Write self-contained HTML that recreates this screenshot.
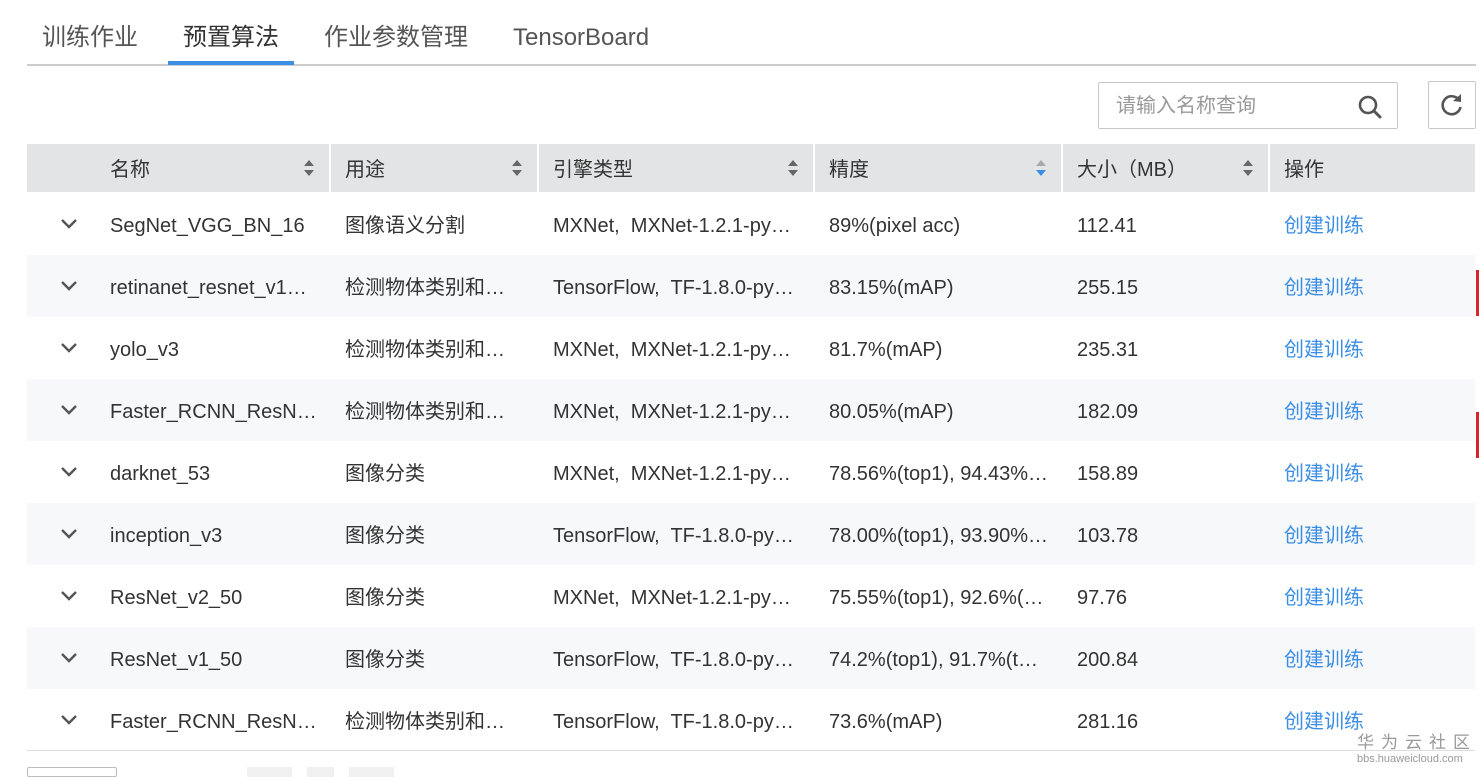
<!DOCTYPE html>
<html><head><meta charset="utf-8"><style>
*{margin:0;padding:0;box-sizing:border-box}
body{width:1479px;height:773px;background:#fff;font-family:"Liberation Sans","Noto Sans CJK SC",sans-serif;color:#333;position:relative;overflow:hidden}
.tab{position:absolute;top:23px;font-size:24px;color:#555;line-height:30px}
.abs{position:absolute}
.row{position:absolute;left:27px;width:1448px;height:62px;font-size:20px;color:#333}
.row div{position:absolute;top:2px;line-height:62px;white-space:nowrap}
.g{background:#f7f8f9}
.hd{position:absolute;left:27px;top:144px;width:1448px;height:48px;background:#e3e4e6;font-size:20px;color:#333}
.hd div.t{position:absolute;top:2px;line-height:48px}
.sep{position:absolute;top:0;width:2px;height:48px;background:#fff}
.sort{position:absolute;top:14px;width:12px;height:20px}
a{color:#3b8ee4;text-decoration:none}
</style></head><body>
<div class="tab" style="left:42px">训练作业</div>
<div class="tab" style="left:183px;color:#333">预置算法</div>
<div class="tab" style="left:324px">作业参数管理</div>
<div class="tab" style="left:513px">TensorBoard</div>
<div class="abs" style="left:27px;top:64px;width:1449px;height:2px;background:#ccc"></div>
<div class="abs" style="left:168px;top:61px;width:126px;height:4px;background:#3b8ee4"></div>

<div class="abs" style="left:1098px;top:82px;width:300px;height:47px;border:1px solid #c8c8c8;border-radius:2px"></div>
<div class="abs" style="left:1116px;top:92px;font-size:20px;color:#999;line-height:28px">请输入名称查询</div>
<svg class="abs" style="left:1356px;top:93px" width="28" height="28" viewBox="0 0 28 28"><circle cx="12" cy="12" r="8" fill="none" stroke="#555" stroke-width="2.6"/><line x1="18" y1="18" x2="24" y2="24" stroke="#555" stroke-width="3" stroke-linecap="round"/></svg>
<div class="abs" style="left:1428px;top:81px;width:48px;height:48px;border:1px solid #c8c8c8;border-radius:2px"></div>
<svg class="abs" style="left:1439px;top:92px" width="26" height="26" viewBox="0 0 26 26"><path d="M20 8A9 9 0 1 0 21.5 15" fill="none" stroke="#555" stroke-width="2.6"/><path d="M14 9L22 10L22 2Z" fill="#555"/></svg>

<div class="hd">
<div class="t" style="left:83px">名称</div>
<div class="t" style="left:318px">用途</div>
<div class="t" style="left:526px">引擎类型</div>
<div class="t" style="left:802px">精度</div>
<div class="t" style="left:1050px">大小（MB）</div>
<div class="t" style="left:1257px">操作</div>
<div class="sep" style="left:302px"></div><div class="sep" style="left:510px"></div><div class="sep" style="left:786px"></div><div class="sep" style="left:1034px"></div><div class="sep" style="left:1241px"></div>
<svg class="sort" style="left:276px" viewBox="0 0 12 20"><path d="M6 2L11 8H1Z M6 18L11 12H1Z" fill="#666"/></svg>
<svg class="sort" style="left:484px" viewBox="0 0 12 20"><path d="M6 2L11 8H1Z M6 18L11 12H1Z" fill="#666"/></svg>
<svg class="sort" style="left:760px" viewBox="0 0 12 20"><path d="M6 2L11 8H1Z M6 18L11 12H1Z" fill="#666"/></svg>
<svg class="sort" style="left:1008px" viewBox="0 0 12 20"><path d="M6 2L11 8H1Z" fill="#aaa"/><path d="M6 18L11 12H1Z" fill="#3b8ee4"/></svg>
<svg class="sort" style="left:1215px" viewBox="0 0 12 20"><path d="M6 2L11 8H1Z M6 18L11 12H1Z" fill="#666"/></svg>
</div>

<div id="rows"></div>
<div class="abs" style="left:27px;top:750px;width:1448px;height:1px;background:#ddd"></div>
<div class="abs" style="left:27px;top:767px;width:90px;height:10px;border:1px solid #bbb;border-radius:2px"></div>
<div class="abs" style="left:247px;top:767px;width:45px;height:10px;background:#f0f0f0"></div>
<div class="abs" style="left:307px;top:767px;width:27px;height:10px;background:#f0f0f0"></div>
<div class="abs" style="left:349px;top:767px;width:45px;height:10px;background:#f0f0f0"></div>
<div class="abs" style="left:1476px;top:270px;width:3px;height:46px;background:#d9232e"></div>
<div class="abs" style="left:1476px;top:412px;width:3px;height:46px;background:#d9232e"></div>
<div class="abs" style="left:1357px;top:732px;font-size:17px;line-height:22px;color:#999;letter-spacing:7px;white-space:nowrap">华为云社区</div>
<div class="abs" style="left:1357px;top:753px;font-size:11px;line-height:12px;color:#999;white-space:nowrap">bbs.huaweicloud.com</div>
<script>
var d=[["SegNet_VGG_BN_16","图像语义分割","MXNet,&nbsp; MXNet-1.2.1-py…","89%(pixel acc)","112.41"],
["retinanet_resnet_v1…","检测物体类别和…","TensorFlow,&nbsp; TF-1.8.0-py…","83.15%(mAP)","255.15"],
["yolo_v3","检测物体类别和…","MXNet,&nbsp; MXNet-1.2.1-py…","81.7%(mAP)","235.31"],
["Faster_RCNN_ResN…","检测物体类别和…","MXNet,&nbsp; MXNet-1.2.1-py…","80.05%(mAP)","182.09"],
["darknet_53","图像分类","MXNet,&nbsp; MXNet-1.2.1-py…","78.56%(top1), 94.43%…","158.89"],
["inception_v3","图像分类","TensorFlow,&nbsp; TF-1.8.0-py…","78.00%(top1), 93.90%…","103.78"],
["ResNet_v2_50","图像分类","MXNet,&nbsp; MXNet-1.2.1-py…","75.55%(top1), 92.6%(…","97.76"],
["ResNet_v1_50","图像分类","TensorFlow,&nbsp; TF-1.8.0-py…","74.2%(top1), 91.7%(t…","200.84"],
["Faster_RCNN_ResN…","检测物体类别和…","TensorFlow,&nbsp; TF-1.8.0-py…","73.6%(mAP)","281.16"]];
var h="";d.forEach(function(r,i){h+='<div class="row'+(i%2?' g':'')+'" style="top:'+(193+62*i)+'px"><svg style="position:absolute;left:33px;top:25px" width="18" height="12" viewBox="0 0 18 12"><path d="M2 2L9 9L16 2" fill="none" stroke="#555" stroke-width="2.4"/></svg><div style="left:83px">'+r[0]+'</div><div style="left:318px">'+r[1]+'</div><div style="left:526px">'+r[2]+'</div><div style="left:802px">'+r[3]+'</div><div style="left:1050px">'+r[4]+'</div><div style="left:1257px"><a>创建训练</a></div></div>'});
document.getElementById("rows").innerHTML=h;
</script>
</body></html>
